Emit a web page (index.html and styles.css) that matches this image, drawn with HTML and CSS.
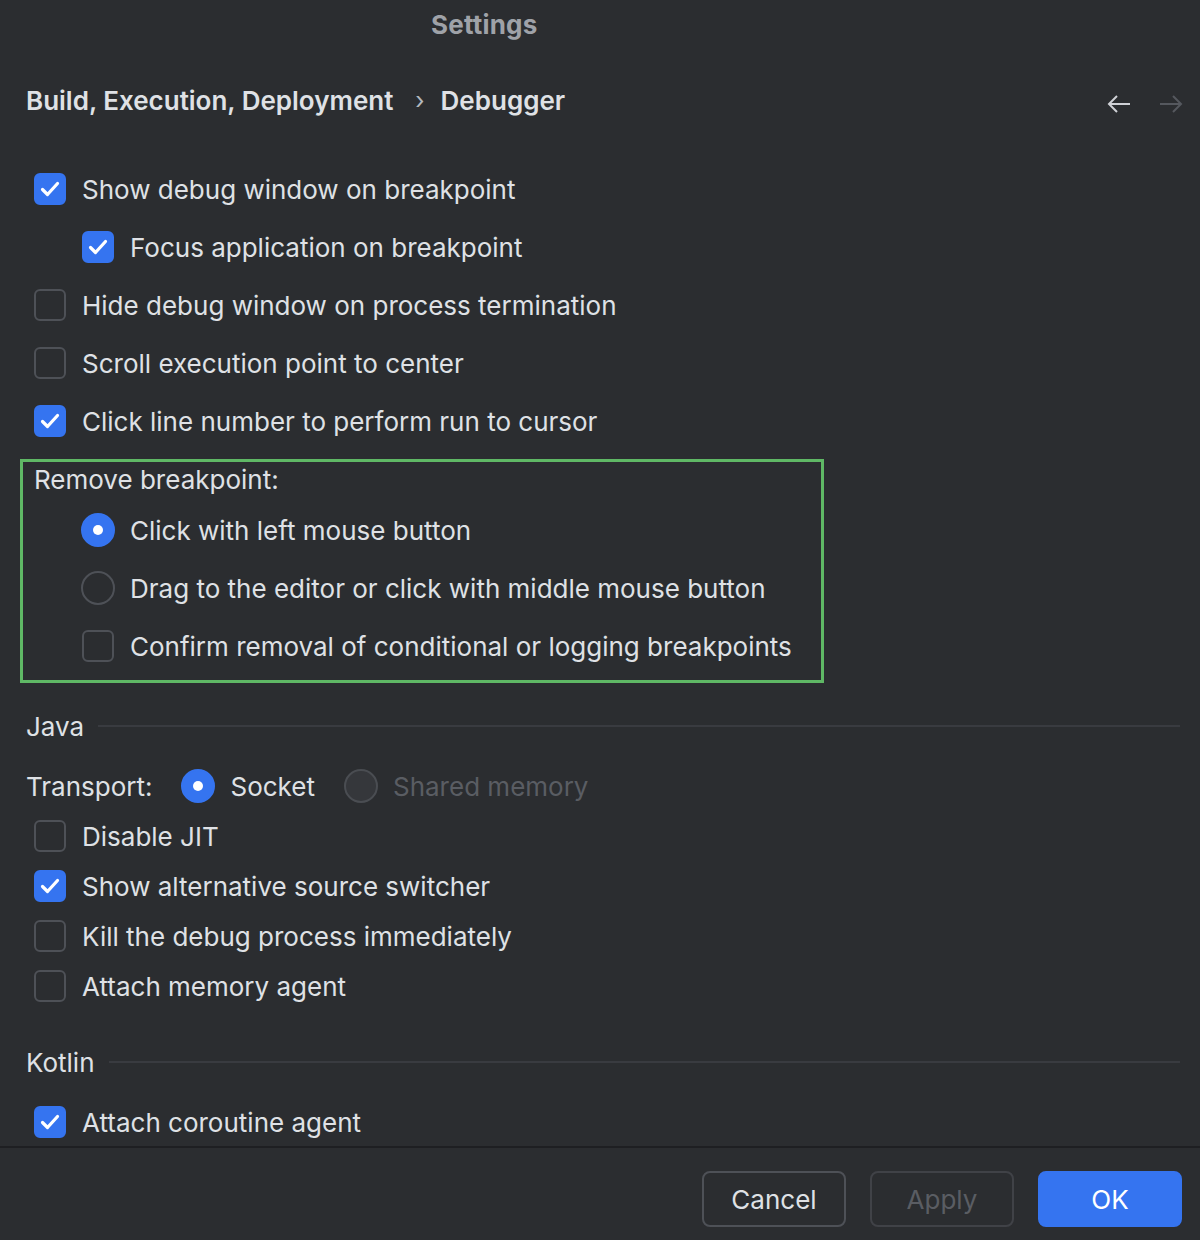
FILE: index.html
```html
<!DOCTYPE html>
<html lang="en">
<head>
    <meta charset="UTF-8">
    <title>Settings</title>
    <link rel="stylesheet" href="styles.css">
</head>
<body>
    <div class="dialog">
        <div class="main">
            <div class="title">Settings</div>
            <div class="crumbs">
                <span>Build, Execution, Deployment</span>
                <span class="sep">›</span>
                <span>Debugger</span>
                <div class="nav">
                    <svg width="26" height="26" viewBox="0 0 26 26"><path d="M24 13H3M11 5L3 13L11 21" fill="none" stroke="#cfd1d6" stroke-width="2"/></svg>
                    <svg width="26" height="26" viewBox="0 0 26 26"><path d="M2 13H23M15 5L23 13L15 21" fill="none" stroke="#55585e" stroke-width="2"/></svg>
                </div>
            </div>

            <div class="options">
                <div class="row"><span class="cb on"><svg viewBox="0 0 32 32"><path d="M8.5 16.5L13.5 21.5L23.5 10.5" fill="none" stroke="#fff" stroke-width="3.2" stroke-linecap="round" stroke-linejoin="round"/></svg></span>Show debug window on breakpoint</div>
                <div class="row indent"><span class="cb on"><svg viewBox="0 0 32 32"><path d="M8.5 16.5L13.5 21.5L23.5 10.5" fill="none" stroke="#fff" stroke-width="3.2" stroke-linecap="round" stroke-linejoin="round"/></svg></span>Focus application on breakpoint</div>
                <div class="row"><span class="cb"></span>Hide debug window on process termination</div>
                <div class="row"><span class="cb"></span>Scroll execution point to center</div>
                <div class="row"><span class="cb on"><svg viewBox="0 0 32 32"><path d="M8.5 16.5L13.5 21.5L23.5 10.5" fill="none" stroke="#fff" stroke-width="3.2" stroke-linecap="round" stroke-linejoin="round"/></svg></span>Click line number to perform run to cursor</div>
            </div>

            <div class="group">
                <div class="group-label">Remove breakpoint:</div>
                <div class="row indent"><span class="radio on"></span>Click with left mouse button</div>
                <div class="row indent"><span class="radio"></span>Drag to the editor or click with middle mouse button</div>
                <div class="row indent"><span class="cb"></span>Confirm removal of conditional or logging breakpoints</div>
            </div>

            <div class="section java">Java</div>
            <div class="transport">
                <span class="lbl">Transport:</span>
                <span class="radio on"></span><span class="opt">Socket</span>
                <span class="radio off"></span><span class="opt disabled">Shared memory</span>
            </div>
            <div class="options compact">
                <div class="row"><span class="cb"></span>Disable JIT</div>
                <div class="row"><span class="cb on"><svg viewBox="0 0 32 32"><path d="M8.5 16.5L13.5 21.5L23.5 10.5" fill="none" stroke="#fff" stroke-width="3.2" stroke-linecap="round" stroke-linejoin="round"/></svg></span>Show alternative source switcher</div>
                <div class="row"><span class="cb"></span>Kill the debug process immediately</div>
                <div class="row"><span class="cb"></span>Attach memory agent</div>
            </div>

            <div class="section kotlin">Kotlin</div>
            <div class="options compact kotlin-opts">
                <div class="row"><span class="cb on"><svg viewBox="0 0 32 32"><path d="M8.5 16.5L13.5 21.5L23.5 10.5" fill="none" stroke="#fff" stroke-width="3.2" stroke-linecap="round" stroke-linejoin="round"/></svg></span>Attach coroutine agent</div>
            </div>
        </div>
        <div class="footer">
            <button class="btn">Cancel</button>
            <button class="btn disabled">Apply</button>
            <button class="btn primary">OK</button>
        </div>
    </div>
</body>
</html>
```

FILE: styles.css
```css
body {
    margin: 0;
    background-color: #2b2d30;
    color: #dfe1e5;
    font-family: Inter, "Noto Sans", sans-serif;
    font-size: 26px;
}
.dialog {
    width: 1200px;
    height: 1240px;
    display: flex;
    flex-direction: column;
}
.main {
    height: 1146px;
    overflow: hidden;
}
.title {
    height: 50px;
    line-height: 50px;
    font-weight: 700;
    color: #9fa2a8;
    padding-left: 431px;
    letter-spacing: 0.2px;
}
.crumbs {
    margin-top: 24px;
    height: 52px;
    display: flex;
    align-items: center;
    padding-left: 26px;
    padding-right: 16px;
    font-weight: 600;
}
.crumbs .sep {
    font-weight: 400;
    color: #b4b8bf;
    margin: 0 16px 0 22px;
    font-size: 24px;
}
.nav {
    margin-left: auto;
    display: flex;
    gap: 26px;
    padding-top: 8px;
}
.options {
    margin-top: 34px;
    padding-left: 34px;
}
.row {
    height: 58px;
    display: flex;
    align-items: center;
    gap: 16px;
    white-space: nowrap;
}
.row.indent {
    padding-left: 48px;
}
.cb {
    width: 32px;
    height: 32px;
    box-sizing: border-box;
    border: 2px solid #4e5157;
    border-radius: 6px;
    flex-shrink: 0;
}
.cb.on {
    background-color: #3574f0;
    border-color: #3574f0;
}
.cb svg {
    display: block;
    width: 32px;
    height: 32px;
    margin: -2px;
}
.radio {
    width: 34px;
    height: 34px;
    box-sizing: border-box;
    border: 2px solid #4e5157;
    border-radius: 50%;
    flex-shrink: 0;
    position: relative;
    margin-left: -1px;
    margin-right: -1px;
}
.radio.on {
    background-color: #3574f0;
    border-color: #3574f0;
}
.radio.on::after {
    content: "";
    position: absolute;
    left: 10px;
    top: 10px;
    width: 10px;
    height: 10px;
    border-radius: 50%;
    background-color: #fff;
}
.radio.off {
    background-color: #35373b;
    border-color: #4a4d52;
}
.group {
    margin-top: 9px;
    width: 804px;
    margin-left: 20px;
    box-sizing: border-box;
    border: 3px solid #5fb865;
    padding: 0 0 5px 11px;
}
.group-label {
    height: 39px;
    line-height: 36px;
}
.group .row {
    padding-left: 48px;
}
.section {
    display: flex;
    align-items: center;
    height: 36px;
    padding-left: 26px;
    padding-right: 20px;
    margin-top: 25px;
}
.section::after {
    content: "";
    flex: 1;
    height: 2px;
    background-color: #393b40;
    margin-left: 14px;
}
.section.kotlin {
    margin-top: 33px;
}
.transport {
    margin-top: 17px;
    height: 50px;
    display: flex;
    align-items: center;
    padding-left: 26px;
}
.transport .lbl {
    margin-right: 30px;
}
.transport .opt {
    margin-left: 16px;
    margin-right: 30px;
}
.transport .opt.disabled {
    color: #5a5d63;
}
.options.compact {
    margin-top: 0;
}
.options.compact .row {
    height: 50px;
}
.kotlin-opts {
    padding-top: 17px;
}
.footer {
    height: 92px;
    border-top: 2px solid #1e1f22;
    display: flex;
    justify-content: flex-end;
    align-items: flex-start;
    padding: 23px 18px 0 0;
    gap: 24px;
    box-sizing: border-box;
}
.btn {
    width: 144px;
    height: 56px;
    border: 2px solid #4e5157;
    border-radius: 8px;
    background-color: #2b2d30;
    color: #dfe1e5;
    font-family: Inter, "Noto Sans", sans-serif;
    font-size: 26px;
    padding: 0;
}
.btn.disabled {
    color: #5a5d63;
    border-color: #404247;
}
.btn.primary {
    background-color: #3574f0;
    border-color: #3574f0;
    color: #fff;
}
```
